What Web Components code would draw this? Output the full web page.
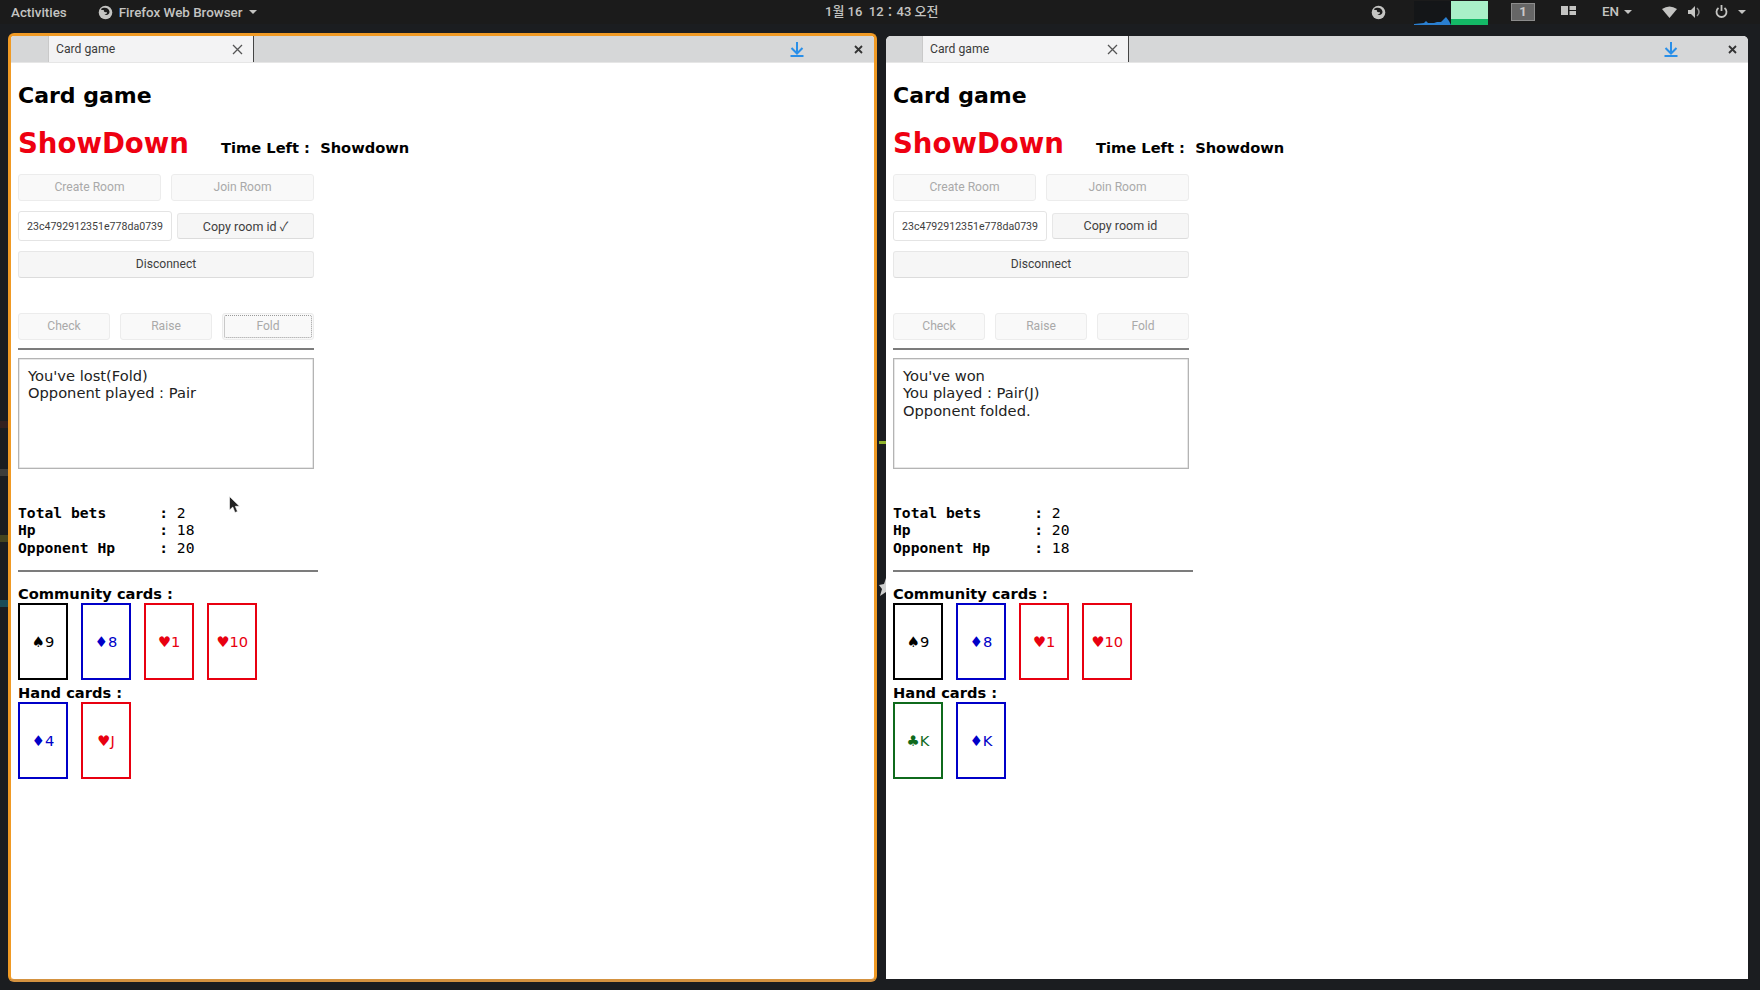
<!DOCTYPE html>
<html>
<head>
<meta charset="utf-8">
<title>Card game</title>
<style>
  html, body { margin: 0; height: 100%; }
  body { width: 1760px; height: 990px; overflow: hidden; background: #1b1d20; }
</style>
</head>
<body>
<desk-top>
  <top-panel slot="panel"></top-panel>
  <browser-window focused>
    <game-page copied focus-fold cursor hp="18" opp-hp="20"
      log="You've lost(Fold)&#10;Opponent played : Pair"
      community="S9 D8 H1 H10" hand="D4 HJ"></game-page>
  </browser-window>
  <browser-window>
    <game-page hp="20" opp-hp="18"
      log="You've won&#10;You played : Pair(J)&#10;Opponent folded."
      community="S9 D8 H1 H10" hand="CK DK"></game-page>
  </browser-window>
</desk-top>

<script>
const UI_FONT = 'Roboto, "Noto Sans CJK KR", sans-serif';

/**
 * DeskTop - the panel on top and the two tiled windows below it
 */
class DeskTop extends HTMLElement {
  constructor() {
    super();
    this.attachShadow({mode: 'open'}).innerHTML = `
      <style>
        :host { display: block; position: relative; width: 1760px; height: 990px; background: #1b1d20; }
        .tiles { display: flex; gap: 9px; padding: 3px 12px 0 8px; height: 957px; box-sizing: border-box; align-items: flex-start; }
        .mark { position: absolute; }
        .green { left: 879px; top: 441px; width: 7px; height: 3px; background: #8fb32c; }
        .star { left: 878px; top: 577px; width: 8px; height: 20px; }
        .edge { left: 0; width: 8px; height: 7px; }
      </style>
      <slot name="panel"></slot>
      <div class="tiles"><slot></slot></div>
      <div class="mark green"></div>
      <svg class="mark star" viewBox="0 0 8 20"><path d="M8 1 6 7 1 8 4 12 2 19 8 15Z" fill="#cfd0cf"/></svg>
      <div class="mark edge" style="top:421px;background:#33201f"></div>
      <div class="mark edge" style="top:469px;background:#3d3d3a"></div>
      <div class="mark edge" style="top:535px;background:#45451f"></div>
      <div class="mark edge" style="top:600px;background:#1b4c57"></div>
    `;
  }
}

/**
 * TopPanel - the dark gnome bar
 */
class TopPanel extends HTMLElement {
  constructor() {
    super();
    this.attachShadow({mode: 'open'}).innerHTML = `
      <style>
        :host { display: block; height: 30px; font: 500 13.400px ${UI_FONT}; color: #c4c4c2; }
        .bar { position: relative; display: flex; align-items: center; height: 24px; padding-left: 11px; background: #1b1b1b; }
        .app { display: flex; align-items: center; gap: 6px; margin-left: 31px; }
        .caret { width: 0; height: 0; border: 4px solid transparent; border-top: 4.500px solid #c4c4c2; border-bottom: 0; }
        .clock { position: absolute; left: 825px; top: 3px; font-size: 13px; line-height: 17px; }
        .tray { position: absolute; left: 0; top: 0; height: 24px; width: 100%; pointer-events: none; }
        .tray > * { position: absolute; }
        svg { display: block; }
        .workspace { left: 1511px; top: 3px; width: 24px; height: 18px; box-sizing: border-box; border: 1px solid #8c8c8c; background: #666; text-align: center; line-height: 16px; color: #c9c9c9; font-size: 13px; font-weight: bold; }
        .graph { left: 1414px; top: 1px; }
        .lang { left: 1602px; top: 4px; display: flex; align-items: center; gap: 5px; }
      </style>
      <div class="bar">
        <span>Activities</span>
        <span class="app">
          <svg width="15" height="15" viewBox="0 0 15 15"><circle cx="7.500" cy="7.500" r="6.800" fill="#c4c4c2"/><path d="M3 4C6 1.500 11 2.500 11.500 6.500 11.800 9.500 8.500 11 6.500 9.500 8.500 9.500 9.500 8 8.500 7 7 7.500 5 6.500 6 5 4.500 5 3.500 5.500 3 4Z" fill="#1b1b1b"/></svg>
          <span>Firefox Web Browser</span>
          <span class="caret"></span>
        </span>
        <span class="clock">1월 16&nbsp; 12：43 오전</span>
        <div class="tray">
          <svg style="left:1371px;top:5px" width="15" height="15" viewBox="0 0 15 15"><circle cx="7.500" cy="7.500" r="6.800" fill="#c4c4c2"/><path d="M3 4C6 1.500 11 2.500 11.500 6.500 11.800 9.500 8.500 11 6.500 9.500 8.500 9.500 9.500 8 8.500 7 7 7.500 5 6.500 6 5 4.500 5 3.500 5.500 3 4Z" fill="#1b1b1b"/></svg>
          <svg class="graph" width="75" height="24" viewBox="0 0 75 24">
            <rect width="37" height="24" fill="#141618"/>
            <path d="M0 24V23L10 22 12 20 14 22 20 22 23 21 27 21 30 18 32 16 35 20 37 24Z" fill="#2a7fd0"/>
            <rect x="37" width="37" height="24" fill="#a9f0c8"/>
            <rect x="37" y="18" width="37" height="6" fill="#14b866"/>
          </svg>
          <div class="workspace">1</div>
          <svg style="left:1561px;top:6px" width="15" height="9" viewBox="0 0 15 9"><path d="M0 0H7V9H0ZM8.500 0H15V4H8.500ZM8.500 5H15V9H8.500Z" fill="#c4c4c2"/></svg>
          <span class="lang">EN <span class="caret"></span></span>
          <svg style="left:1662px;top:6px" width="15" height="12" viewBox="0 0 15 12"><path d="M0 3Q7.500 -2 15 3L7.500 12Z" fill="#c4c4c2"/></svg>
          <svg style="left:1688px;top:6px" width="14" height="12" viewBox="0 0 14 12"><path d="M0 4H3L7 0V12L3 8H0Z" fill="#c4c4c2"/><path d="M9 2Q13 6 9 10" fill="none" stroke="#8a8a8a" stroke-width="1.500"/></svg>
          <svg style="left:1715px;top:5px" width="13" height="13" viewBox="0 0 13 13"><path d="M3.500 3A5 5 0 1 0 9.500 3" fill="none" stroke="#c4c4c2" stroke-width="1.800"/><path d="M6.500 0V6" stroke="#c4c4c2" stroke-width="1.800"/></svg>
          <span class="caret" style="left:1738px;top:10px"></span>
        </div>
      </div>
    `;
  }
}

/**
 * BrowserWindow - tab strip and page area
 */
class BrowserWindow extends HTMLElement {
  constructor() {
    super();
    this.attachShadow({mode: 'open'}).innerHTML = `
      <style>
        :host { display: block; box-sizing: border-box; width: 862px; height: 943px; margin-top: 3px; background: #fff; border-radius: 5px 5px 0 0; font: 12.200px ${UI_FONT}; color: #3c3c3c; overflow: hidden; }
        :host([focused]) { width: 869px; height: 949px; margin-top: 0; border: 3px solid #f09a24; border-bottom-color: #d49240; border-radius: 6px; }
        .strip { display: flex; align-items: stretch; height: 26px; background: #d6d7d8; border-bottom: 1px solid #e6e6e6; }
        .tab { display: flex; align-items: center; justify-content: space-between; box-sizing: border-box; width: 207px; margin-left: 36px; padding: 0 10px 0 7px; background: #f3f3f4; border-left: 1px solid #c9c9c9; border-right: 1px solid #444; }
        :host([focused]) .tab { width: 206px; margin-left: 37px; }
        .actions { flex: 1; display: flex; align-items: center; justify-content: flex-end; gap: 50px; padding-right: 11px; }
        svg { display: block; }
      </style>
      <div class="strip">
        <div class="tab">
          <span>Card game</span>
          <svg width="11" height="11" viewBox="0 0 11 11"><path d="M1 1 10 10M10 1 1 10" stroke="#555" stroke-width="1.300"/></svg>
        </div>
        <div class="actions">
          <svg width="14" height="15" viewBox="0 0 14 15"><path d="M7 0V11M1.500 6 7 11.500 12.500 6M0.500 14H13.500" fill="none" stroke="#2a8fe8" stroke-width="2"/></svg>
          <svg width="9" height="9" viewBox="0 0 9 9"><path d="M1 1 8 8M8 1 1 8" stroke="#333" stroke-width="1.800"/></svg>
        </div>
      </div>
      <slot></slot>
    `;
  }
}

/**
 * PlainButton - gtk looking form button
 */
class PlainButton extends HTMLElement {
  constructor() {
    super();
    this.attachShadow({mode: 'open'}).innerHTML = `
      <style>
        :host { display: flex; align-items: center; justify-content: center; box-sizing: border-box; height: 27px; padding-bottom: 1px; background: #f6f6f6; border: 1px solid #e7e7e7; border-bottom-color: #dcdcdc; border-radius: 3px; font: 12.100px ${UI_FONT}; color: #3e3e3e; white-space: nowrap; position: relative; }
        :host([disabled]) { color: #a9a9a9; background: #f9f9f9; border-color: #ececec; }
        :host([focus-ring])::after { content: ""; position: absolute; inset: 1px 1px; border: 1px dotted #9a9a9a; border-radius: 2px; }
      </style>
      <slot></slot>
    `;
  }
}

/**
 * PlayCard - one card, text comes from the suit + rank code
 */
class PlayCard extends HTMLElement {
  static suits = {
    S: {glyph: '♠', color: '#000000'},
    D: {glyph: '♦', color: '#0000c8'},
    H: {glyph: '♥', color: '#e80010'},
    C: {glyph: '♣', color: '#0f6a1c'}
  };

  constructor() {
    super();
    const code = this.getAttribute('code');
    const suit = PlayCard.suits[code[0]];
    this.attachShadow({mode: 'open'}).innerHTML = `
      <style>
        :host { display: flex; align-items: center; justify-content: center; box-sizing: border-box; width: 50px; height: 77px; border: 2px solid ${suit.color}; color: ${suit.color}; font: 14.670px "DejaVu Sans", sans-serif; }
      </style>
      <span>${suit.glyph}${code.slice(1)}</span>
    `;
  }
}

/**
 * GamePage - everything inside the browser tab
 */
class GamePage extends HTMLElement {
  constructor() {
    super();
    const cards = (name) => this.getAttribute(name).split(' ').map(code => `<play-card code="${code}"></play-card>`).join('');
    this.attachShadow({mode: 'open'}).innerHTML = `
      <style>
        :host { display: block; position: relative; width: 296px; margin-left: 7px; font: 14.670px "DejaVu Sans", sans-serif; color: #000; }
        h1 { margin: 0; padding-top: 17px; font-size: 22px; line-height: 32px; font-weight: bold; }
        .title { display: flex; align-items: baseline; margin-top: 9px; height: 49px; line-height: 46px; font-weight: bold; white-space: nowrap; }
        .title b { font-size: 27.600px; color: #ee0011; margin-right: 32px; }
        .row { display: flex; }
        .two { gap: 10px; margin-top: 4px; }
        .two plain-button { flex: 1; }
        .room { align-items: center; justify-content: space-between; margin-top: 10px; height: 30px; }
        .room .id { display: flex; align-items: center; justify-content: center; box-sizing: border-box; width: 154px; height: 30px; border: 1px solid #e4e4e4; border-radius: 3px; font: 10.600px ${UI_FONT}; color: #3e3e3e; }
        .room plain-button { width: 137px; height: 26px; font-size: 12.500px; }
        .wide { margin-top: 10px; }
        .actions { gap: 10px; margin-top: 35px; }
        .actions plain-button { flex: 1; }
        hr { margin: 0; border: 0; height: 2px; background: #7c7c7c; }
        .rule1 { margin-top: 8px; }
        .log { box-sizing: border-box; margin-top: 8px; height: 111px; padding: 8px 9px; border: 1px solid #b4b4b4; box-shadow: inset 0 0 0 0.500px #d0d0d0; line-height: 17.300px; white-space: pre-wrap; color: #222; }
        .stats { margin: 35px 0 0; font: 14.670px/17.300px "DejaVu Sans Mono", monospace; white-space: pre; }
        .rule2 { margin-top: 14px; width: 300px; }
        .label { margin-top: 13px; font-weight: bold; line-height: 17px; height: 18px; white-space: nowrap; }
        .cards { display: flex; gap: 13.100px; }
        .hand { margin-top: 4px; }
        .cursor { position: absolute; left: 211px; top: 433px; }
      </style>
      <h1>Card game</h1>
      <div class="title"><b>ShowDown</b><span>Time Left :&nbsp; Showdown</span></div>
      <div class="row two"><plain-button disabled>Create Room</plain-button><plain-button disabled>Join Room</plain-button></div>
      <div class="row room"><div class="id">23c4792912351e778da0739</div><plain-button>Copy room id${this.hasAttribute('copied') ? ' ✓' : ''}</plain-button></div>
      <div class="wide"><plain-button>Disconnect</plain-button></div>
      <div class="row actions">
        <plain-button disabled>Check</plain-button>
        <plain-button disabled>Raise</plain-button>
        <plain-button disabled ${this.hasAttribute('focus-fold') ? 'focus-ring' : ''}>Fold</plain-button>
      </div>
      <hr class="rule1">
      <div class="log">${this.getAttribute('log')}</div>
      <div class="stats"><b>Total bets      :</b> 2
<b>Hp              :</b> ${this.getAttribute('hp')}
<b>Opponent Hp     :</b> ${this.getAttribute('opp-hp')}</div>
      <hr class="rule2">
      <div class="label">Community cards :</div>
      <div class="cards">${cards('community')}</div>
      <div class="label hand">Hand cards :</div>
      <div class="cards">${cards('hand')}</div>
      ${this.hasAttribute('cursor') ? '<svg class="cursor" width="11" height="18" viewBox="0 0 11 18"><path d="M0.500 0.500V14L3.800 11 6 16.500 8.500 15.500 6.300 10.300H10.500Z" fill="#222" stroke="#fff" stroke-width="0.600"/></svg>' : ''}
    `;
  }
}

customElements.define('plain-button', PlainButton);
customElements.define('play-card', PlayCard);
customElements.define('game-page', GamePage);
customElements.define('browser-window', BrowserWindow);
customElements.define('top-panel', TopPanel);
customElements.define('desk-top', DeskTop);
</script>
</body>
</html>
